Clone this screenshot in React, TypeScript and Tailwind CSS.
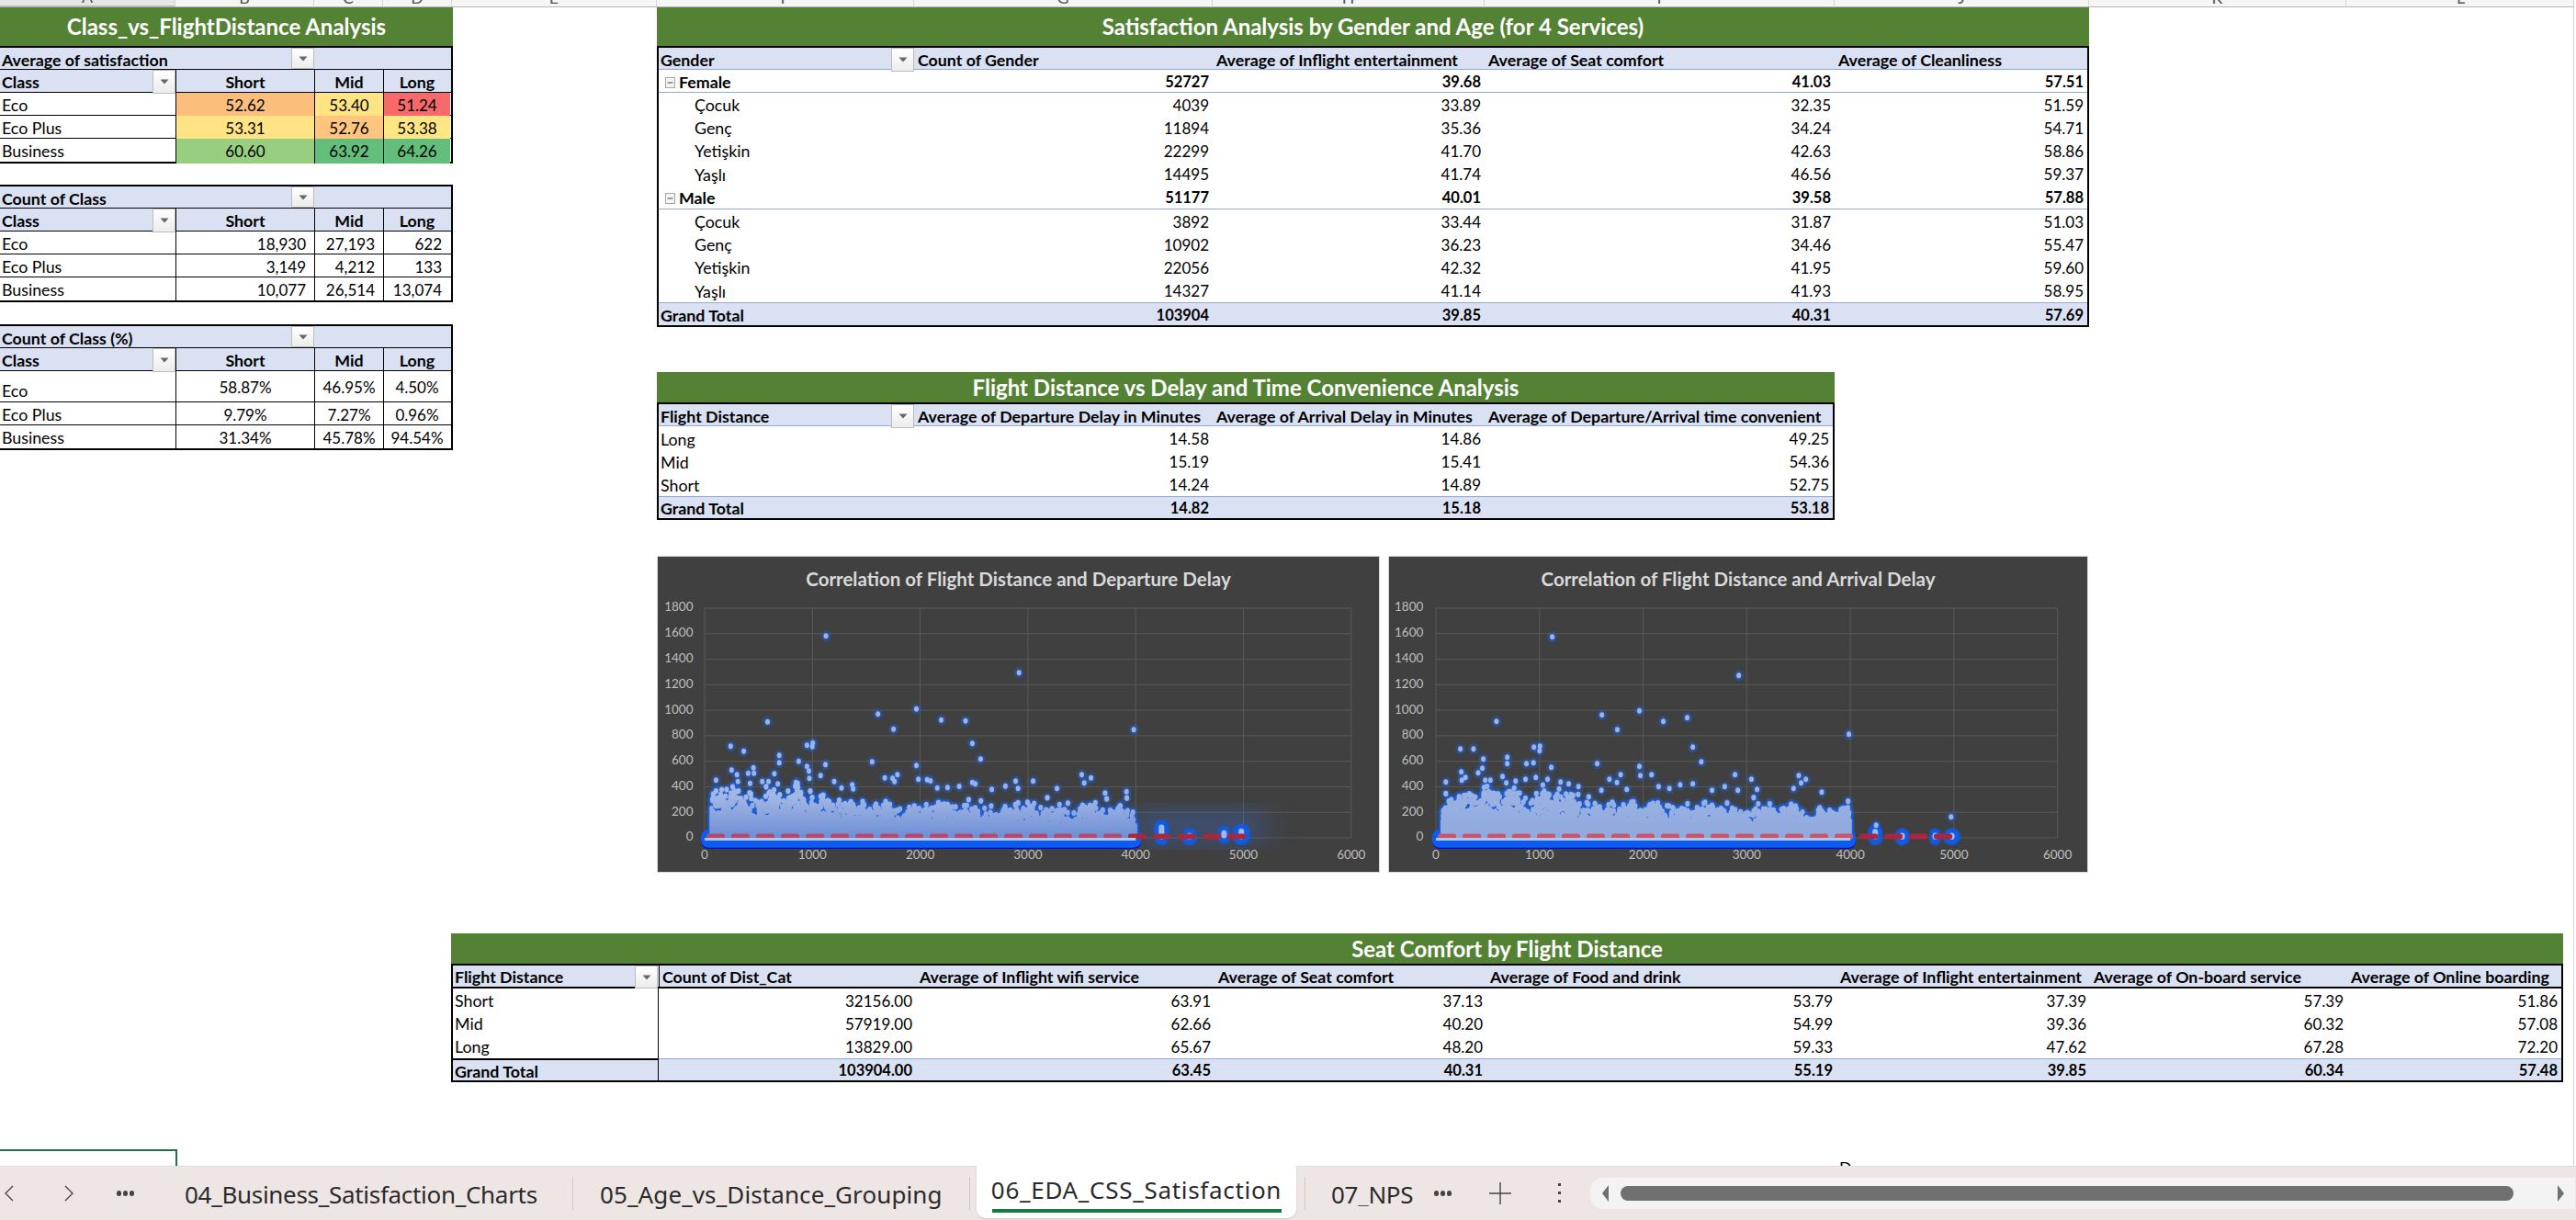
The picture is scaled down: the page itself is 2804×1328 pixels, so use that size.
// App.tsx - Excel pivot sheet, 06_EDA_CSS_Satisfaction tab
import React from "react";

const GREEN_TITLE = "bg-[#548235] text-white font-bold flex items-center justify-center text-[24px]";
const NUM = "text-[17px]";
const NUM_B = "text-[16.5px]";

const rng = (seed: number) => () => {
  seed |= 0;
  seed = (seed + 0x6d2b79f5) | 0;
  let t = Math.imul(seed ^ (seed >>> 15), 1 | seed);
  t = (t + Math.imul(t ^ (t >>> 7), 61 | t)) ^ t;
  return ((t ^ (t >>> 14)) >>> 0) / 4294967296;
};

function Drop({ className = "" }: { className?: string }) {
  return (
    <div className={"w-[25px] h-full shrink-0 border border-[#bdbdbd] bg-gradient-to-b from-white to-[#ececec] flex items-center justify-center " + className}>
      <svg width="10" height="6" viewBox="0 0 10 6"><path d="M0.5 0.5h9L5 5.5z" fill="#666" /></svg>
    </div>
  );
}

const CLASS_ROWS = ["Eco", "Eco Plus", "Business"];

function ClassHead({ title }: { title: string }) {
  return (
    <>
      <div className="flex h-[24px] bg-[#d9e1f2] border-b border-black">
        <div className="w-[317px] pl-[2px] font-bold leading-[26px]">{title}</div>
        <Drop />
      </div>
      <div className="grid grid-cols-[191px_151px_75px_73px] h-[25px] bg-[#d9e1f2] border-b border-black font-bold leading-[26px]">
        <div className="flex justify-between pl-[2px]">Class<Drop /></div>
        <div className="text-center border-l border-black">Short</div>
        <div className="text-center border-l border-black">Mid</div>
        <div className="text-center border-l border-black">Long</div>
      </div>
    </>
  );
}

function HeatTable() {
  const vals = [
    [["52.62", "bg-[#fcbf7b]"], ["53.40", "bg-[#ffe484]"], ["51.24", "bg-[#f8696b]"]],
    [["53.31", "bg-[#ffe384]"], ["52.76", "bg-[#fdc57d]"], ["53.38", "bg-[#ffe684]"]],
    [["60.60", "bg-[#98ce7f]"], ["63.92", "bg-[#63be7b]"], ["64.26", "bg-[#63be7b]"]],
  ];
  return (
    <div className="border-t-2 border-b-2 border-r-2 border-black">
      <ClassHead title="Average of satisfaction" />
      {CLASS_ROWS.map((name, i) => (
        <div key={name} className={"grid grid-cols-[191px_151px_75px_73px] h-[25px] leading-[27px] " + (i < 2 ? "border-b border-black" : "")}>
          <div className="pl-[2px]">{name}</div>
          {vals[i].map(([v, bg]) => (
            <div key={v} className={"text-center border-l border-black " + NUM + " " + bg}>{v}</div>
          ))}
        </div>
      ))}
    </div>
  );
}

function CountTable() {
  const vals = [
    ["18,930", "27,193", "622"],
    ["3,149", "4,212", "133"],
    ["10,077", "26,514", "13,074"],
  ];
  return (
    <div className="mt-[23px] border-t-2 border-b-2 border-r-2 border-black">
      <ClassHead title="Count of Class" />
      {CLASS_ROWS.map((name, i) => (
        <div key={name} className={"grid grid-cols-[191px_151px_75px_73px] h-[25px] leading-[27px] " + (i < 2 ? "border-b border-black" : "")}>
          <div className="pl-[2px]">{name}</div>
          {vals[i].map((v) => (
            <div key={v} className={"text-right pr-[9px] border-l border-black " + NUM}>{v}</div>
          ))}
        </div>
      ))}
    </div>
  );
}

function PercentTable() {
  const vals = [
    ["58.87%", "46.95%", "4.50%"],
    ["9.79%", "7.27%", "0.96%"],
    ["31.34%", "45.78%", "94.54%"],
  ];
  return (
    <div className="mt-[24px] border-t-2 border-b-2 border-r-2 border-black">
      <ClassHead title="Count of Class (%)" />
      {CLASS_ROWS.map((name, i) => (
        <div key={name} className={"grid grid-cols-[191px_151px_75px_73px] " + (i === 0 ? "h-[34px] leading-[36px] border-b border-black" : i === 1 ? "h-[25px] leading-[27px] border-b border-black" : "h-[25px] leading-[27px]")}>
          <div className={"pl-[2px] " + (i === 0 ? "pt-[3px]" : "")}>{name}</div>
          {vals[i].map((v) => (
            <div key={v} className={"text-center border-l border-black " + NUM}>{v}</div>
          ))}
        </div>
      ))}
    </div>
  );
}

const GENDER_COLS = "grid grid-cols-[278px_325px_296px_381px_275px]";

function GenderRow({ cells, kind }: { cells: string[]; kind: "female" | "male" | "child" | "last" }) {
  if (kind === "female" || kind === "male") {
    return (
      <div className={GENDER_COLS + (kind === "male" ? " h-[26px]" : " h-[25px]") + " leading-[27px] font-bold border-b border-[#8ea9db]"}>
        <div className="flex items-center pl-[7px] gap-[4px]">
          <svg width="11" height="12" viewBox="0 0 11 12" className="shrink-0">
            <rect x="0.5" y="0.5" width="10" height="11" fill="#f4f4f4" stroke="#a6a6a6" />
            <path d="M2.5 6h6" stroke="#444" />
          </svg>
          {cells[0]}
        </div>
        {cells.slice(1).map((c, i) => (
          <div key={i} className={"text-right pr-[4px] " + NUM_B}>{c}</div>
        ))}
      </div>
    );
  }
  return (
    <div className={GENDER_COLS + (kind === "last" ? " h-[26px] leading-[28px]" : " h-[25px] leading-[27px]")}>
      <div className="pl-[39px]">{cells[0]}</div>
      {cells.slice(1).map((c, i) => (
        <div key={i} className={"text-right pr-[4px] " + NUM}>{c}</div>
      ))}
    </div>
  );
}

function GenderTable() {
  const groups = [
    { head: ["Female", "52727", "39.68", "41.03", "57.51"], rows: [
      ["Çocuk", "4039", "33.89", "32.35", "51.59"],
      ["Genç", "11894", "35.36", "34.24", "54.71"],
      ["Yetişkin", "22299", "41.70", "42.63", "58.86"],
      ["Yaşlı", "14495", "41.74", "46.56", "59.37"],
    ] },
    { head: ["Male", "51177", "40.01", "39.58", "57.88"], rows: [
      ["Çocuk", "3892", "33.44", "31.87", "51.03"],
      ["Genç", "10902", "36.23", "34.46", "55.47"],
      ["Yetişkin", "22056", "42.32", "41.95", "59.60"],
      ["Yaşlı", "14327", "41.14", "41.93", "58.95"],
    ] },
  ];
  return (
    <div className="w-[1559px]">
      <div className={GREEN_TITLE + " h-[42px]"}>Satisfaction Analysis by Gender and Age (for 4 Services)</div>
      <div className="border-2 border-black">
        <div className={GENDER_COLS + " h-[24px] bg-[#d9e1f2] border-b border-[#8ea9db] font-bold leading-[26px]"}>
          <div className="flex justify-between pl-[2px]">Gender<Drop /></div>
          <div className="pl-[4px]">Count of Gender</div>
          <div className="pl-[4px]">Average of Inflight entertainment</div>
          <div className="pl-[4px]">Average of Seat comfort</div>
          <div className="pl-[4px]">Average of Cleanliness</div>
        </div>
        {groups.map((g, n) => (
          <div key={g.head[0]}>
            <GenderRow cells={g.head} kind={n === 0 ? "female" : "male"} />
            {g.rows.map((r, i) => (
              <GenderRow key={r[0]} cells={r} kind={i === 3 ? "last" : "child"} />
            ))}
          </div>
        ))}
        <div className={GENDER_COLS + " h-[25px] bg-[#d9e1f2] border-t border-[#8ea9db] font-bold leading-[26px]"}>
          <div className="pl-[2px]">Grand Total</div>
          {["103904", "39.85", "40.31", "57.69"].map((c) => (
            <div key={c} className={"text-right pr-[4px] " + NUM_B}>{c}</div>
          ))}
        </div>
      </div>
    </div>
  );
}

const DELAY_COLS = "grid grid-cols-[278px_325px_296px_379px]";

function DelayTable() {
  const rows = [
    ["Long", "14.58", "14.86", "49.25"],
    ["Mid", "15.19", "15.41", "54.36"],
    ["Short", "14.24", "14.89", "52.75"],
  ];
  return (
    <div className="w-[1282px] mt-[49px]">
      <div className={GREEN_TITLE + " h-[33px]"}>Flight Distance vs Delay and Time Convenience Analysis</div>
      <div className="border-2 border-black">
        <div className={DELAY_COLS + " h-[24px] bg-[#d9e1f2] border-b border-[#8ea9db] font-bold leading-[26px]"}>
          <div className="flex justify-between pl-[2px]">Flight Distance<Drop /></div>
          <div className="pl-[4px] whitespace-nowrap">Average of Departure Delay in Minutes</div>
          <div className="pl-[4px] whitespace-nowrap">Average of Arrival Delay in Minutes</div>
          <div className="pl-[4px] whitespace-nowrap">Average of Departure/Arrival time convenient</div>
        </div>
        {rows.map((r, i) => (
          <div key={r[0]} className={DELAY_COLS + (i === 2 ? " h-[26px] leading-[28px]" : " h-[25px] leading-[28px]")}>
            <div className="pl-[2px]">{r[0]}</div>
            {r.slice(1).map((c) => (
              <div key={c} className={"text-right pr-[4px] " + NUM}>{c}</div>
            ))}
          </div>
        ))}
        <div className={DELAY_COLS + " h-[24px] bg-[#d9e1f2] border-t border-[#8ea9db] font-bold leading-[25px]"}>
          <div className="pl-[2px]">Grand Total</div>
          {["14.82", "15.18", "53.18"].map((c) => (
            <div key={c} className={"text-right pr-[4px] " + NUM_B}>{c}</div>
          ))}
        </div>
      </div>
    </div>
  );
}

type Pt = [number, number];

const OUT_DEP: Pt[] = [
  [376,307],[773,427],[562,545],[483,562],[256,587],[613,581],[663,584],[515,611],[1009,613],[677,658],[180,667],[207,683],[337,664],[349,656],[348,668],[280,697],[280,721],[320,716],[471,718],[694,709],[562,730],[375,727],[337,733],[341,748],[227,737],[182,745],[216,755],[228,755],[193,760],[270,757],[365,763],[342,772],[150,778],[258,782],[245,782],[195,782],[220,788],[277,790],[318,788],[497,770],[513,772],[523,760],[517,782],[566,775],[584,776],[591,780],[902,760],[921,770],[907,787],[766,781],[802,781],[771,805],[745,797],[851,805],[717,808],[605,803],[626,802],[650,798],[677,785],[683,790],[430,793],[432,806],[393,782],[408,803],[994,815],[950,820],
];
const OUT_ARR: Pt[] = [
  [373,310],[771,436],[559,551],[479,565],[254,586],[610,586],[661,574],[512,613],[1006,628],[673,670],[177,676],[205,676],[334,670],[347,667],[346,682],[277,703],[277,724],[318,724],[333,721],[226,709],[469,724],[691,718],[559,733],[371,736],[224,739],[179,751],[215,754],[519,760],[561,763],[585,760],[763,760],[899,763],[914,775],[495,775],[511,785],[798,775],[904,787],[146,784],[267,766],[275,787],[180,778],[188,769],[230,778],[241,778],[295,781],[316,775],[338,769],[363,775],[408,790],[391,784],[429,799],[600,799],[623,805],[646,793],[673,790],[741,799],[769,811],[714,811],[810,808],[888,805],[948,817],[478,811],[532,808],[1224,898],[1064,925],
];

function envelope(x: number) {
  if (x < 1100) return 300;
  if (x < 1500) return 300 - ((x - 1100) / 400) * 90;
  if (x < 2600) return 210;
  return 190;
}

interface ChartProps {
  id: string;
  title: string;
  width: number;
  plotRight: number;
  labelX: number;
  outliers: Pt[];
  toSx: (z: number) => number;
  seed: number;
  light: boolean;
  blobs: [number, number, number, number][];
}

function Chart({ id, title, width, plotRight, labelX, outliers, toSx, seed, light, blobs }: ChartProps) {
  const pl = 51, top = 7.3, y0 = 257;
  const X = (v: number) => pl + (v * (plotRight - pl)) / 6000;
  const Y = (v: number) => y0 - (v * 250) / 1800;
  const r = rng(seed);
  const p1 = r() * 6, p2 = r() * 6, p3 = r() * 6;
  const wave = (v: number) => 0.5 + 0.2 * Math.sin(v / 110 + p1) + 0.2 * Math.sin(v / 43 + p2) + 0.1 * Math.sin(v / 19 + p3);
  const cols: { x: number; y: number }[] = [];
  for (let v = 62; v < 4000; v += 8) {
    const e = envelope(v);
    cols.push({ x: X(v), y: Y(e * (0.3 + 0.5 * wave(v) + 0.2 * r() * r())) });
  }
  const dots: Pt[] = [];
  for (let i = 0; i < 1000; i++) {
    const v = 70 + r() * 3920;
    const e = envelope(v);
    const k = 0.35 + 0.75 * wave(v) + 0.5 * r() * r();
    dots.push([X(v), Y(e * k)]);
  }
  for (let i = 0; i < 160; i++) {
    const v = 80 + r() * 3900;
    dots.push([X(v), Y(envelope(v) * 0.9 + r() * r() * 170)]);
  }
  const outPts: Pt[] = outliers.map(([xz, yz]) => [toSx(xz), 590 + yz / 3 - 655]);
  const all = [...dots, ...outPts];
  const dashes: number[] = [];
  for (let x = pl + 2; x < X(5000); x += 27) dashes.push(x);
  return (
    <div className="h-[345px] border border-[#d9d9d9] bg-[#404040] shrink-0 flex flex-col" style={{ width }}>
      <div className="h-[49px] flex items-center justify-center text-[#d9d9d9] font-bold text-[20.5px]">{title}</div>
      <svg width={width - 2} height="295" className="block">
        <defs>
          <linearGradient id={id + "g"} gradientUnits="userSpaceOnUse" x1="0" y1={Y(330)} x2="0" y2={y0}>
            <stop offset="0" stopColor={light ? "#9ab1e2" : "#a3b7e5"} />
            <stop offset="1" stopColor={light ? "#8fa9de" : "#6d8ed5"} />
          </linearGradient>
          <filter id={id + "b"} x="-20%" y="-20%" width="140%" height="140%"><feGaussianBlur stdDeviation="1.3" /></filter>
          <filter id={id + "h"} x="-50%" y="-50%" width="200%" height="200%"><feGaussianBlur stdDeviation="16" /></filter>
        </defs>
        {[0, 200, 400, 600, 800, 1000, 1200, 1400, 1600, 1800].map((v) => (
          <g key={v}>
            <line x1={pl} x2={plotRight} y1={Y(v)} y2={Y(v)} stroke="#595959" />
            <text x={labelX} y={Y(v)} textAnchor="end" dominantBaseline="middle" fontSize="13.5" fill="#bfbfbf">{v}</text>
          </g>
        ))}
        {[0, 1000, 2000, 3000, 4000, 5000, 6000].map((v) => (
          <g key={v}>
            <line x1={X(v)} x2={X(v)} y1={top} y2={y0} stroke="#595959" />
            <text x={X(v)} y={276.7} textAnchor="middle" dominantBaseline="middle" fontSize="13.5" fill="#bfbfbf">{v}</text>
          </g>
        ))}
        {!light && <rect x={X(4000)} y={Y(180)} width={X(5200) - X(4000)} height={Y(0) - Y(180)} fill="#3a6fd6" opacity="0.5" filter={`url(#${id}h)`} />}
        <g filter={`url(#${id}b)`}>
          {cols.map((c, i) => (
            <line key={i} x1={c.x} x2={c.x} y1={y0} y2={c.y} stroke="#1560e6" strokeWidth="8" strokeLinecap="round" />
          ))}
          {all.map(([x, y], i) => (
            <ellipse key={i} cx={x} cy={y} rx="5" ry="5.5" fill="#1f5fd6" opacity={i < 1000 ? 0.9 : 0.6} />
          ))}
          {blobs.map(([v, a, b, w], i) => (
            <rect key={i} x={X(v) - w / 2} y={Y(a) - 7} width={w} height={Y(b) - Y(a) + 15} rx={w / 2} fill="#0f5ce8" />
          ))}
        </g>
        <rect x={pl - 4} y={y0 - 8} width={X(4000) - pl + 10} height="20" rx="8" fill="#0a10b0" />
        <rect x={pl - 4} y={y0 - 9} width={X(4000) - pl + 10} height="19.7" rx="8" fill="#0a5cf5" />
        {cols.map((c, i) => (
          <line key={i} x1={c.x} x2={c.x} y1={y0} y2={c.y} stroke={`url(#${id}g)`} strokeWidth="4" strokeLinecap="round" />
        ))}
        {dots.map(([x, y], i) => (
          <ellipse key={i} cx={x} cy={y} rx="2.6" ry="3.1" fill={`url(#${id}g)`} />
        ))}
        {outPts.map(([x, y], i) => (
          <ellipse key={i} cx={x} cy={y} rx="2.5" ry="3" fill="#9cb3e3" />
        ))}
        {blobs.map(([v, a, b], i) => (
          <rect key={i} x={X(v) - 3} y={Y(a) - 2} width="6" height={Y(b) - Y(a) + 4} rx="3" fill="#a3b8e6" />
        ))}
        {dashes.map((x) => (
          <rect key={x} x={x} y={y0 - 4.5} width="20" height="6" rx="2.5" fill={x + 10 > X(4000) ? "#a5283f" : light ? "#c9566f" : "#b5496b"} />
        ))}
        <rect x={pl} y={y0} width={X(4000) - pl} height="3" fill="#b4c5ea" />
      </svg>
    </div>
  );
}

function Charts() {
  return (
    <div className="flex gap-[9px] mt-[39px]">
      <Chart
        id="dep" title="Correlation of Flight Distance and Departure Delay" width={787} plotRight={754.8} labelX={38.5}
        outliers={OUT_DEP} toSx={(z) => z / 1.889 - 16} seed={7} light={false}
        blobs={[[4240, 90, 0, 16], [4500, 25, 0, 16], [4820, 45, 10, 12], [4980, 60, 0, 19]]}
      />
      <Chart
        id="arr" title="Correlation of Flight Distance and Arrival Delay" width={762} plotRight={727.6} labelX={37.3}
        outliers={OUT_ARR} toSx={(z) => z / 1.96 - 12.7} seed={21} light
        blobs={[[4240, 55, 0, 16], [4500, 25, 0, 16], [4820, 25, 0, 12], [4980, 25, 0, 19]]}
      />
    </div>
  );
}

const COMFORT_COLS = "grid grid-cols-[224px_280px_325px_296px_381px_276px_280px_233px]";

function ComfortTable() {
  const rows = [
    ["Short", "32156.00", "63.91", "37.13", "53.79", "37.39", "57.39", "51.86"],
    ["Mid", "57919.00", "62.66", "40.20", "54.99", "39.36", "60.32", "57.08"],
    ["Long", "13829.00", "65.67", "48.20", "59.33", "47.62", "67.28", "72.20"],
  ];
  const heads = [
    "Count of Dist_Cat", "Average of Inflight wifi service", "Average of Seat comfort", "Average of Food and drink",
    "Average of Inflight entertainment", "Average of On-board service", "Average of Online boarding",
  ];
  return (
    <div className="ml-[491px] mt-[66px] w-[2299px]">
      <div className={GREEN_TITLE + " h-[33px]"}>Seat Comfort by Flight Distance</div>
      <div className="border-2 border-black">
        <div className={COMFORT_COLS + " h-[25px] bg-[#d9e1f2] border-b-2 border-black font-bold leading-[25px]"}>
          <div className="flex justify-between pl-[2px] pr-[1px]">Flight Distance<Drop /></div>
          {heads.map((h, i) => (
            <div key={h} className={"whitespace-nowrap " + (i === 0 ? "pl-[3px] border-l border-black" : "pl-[4px]")}>{h}</div>
          ))}
        </div>
        {rows.map((r, i) => (
          <div key={r[0]} className={COMFORT_COLS + (i === 2 ? " h-[26px] leading-[27px]" : " h-[25px] leading-[27px]")}>
            <div className="pl-[2px] border-r border-black">{r[0]}</div>
            {r.slice(1).map((c, j) => (
              <div key={j} className={"text-right pr-[4px] " + NUM}>{c}</div>
            ))}
          </div>
        ))}
        <div className={COMFORT_COLS + " h-[24px] bg-[#d9e1f2] font-bold leading-[24px]"}>
          <div className="pl-[2px] border-t-2 border-r border-black">Grand Total</div>
          {["103904.00", "63.45", "40.31", "55.19", "39.85", "60.34", "57.48"].map((c, j) => (
            <div key={j} className={"text-right pr-[4px] border-t border-[#8ea9db] " + NUM_B}>{c}</div>
          ))}
        </div>
      </div>
    </div>
  );
}

function ColumnStrip() {
  const cols = [
    ["A", "w-[191px] bg-[#e6e6e6] border-b-2 border-b-[#217346]"],
    ["B", "w-[151px]"], ["C", "w-[75px]"], ["D", "w-[75px]"], ["E", "w-[223px]"],
    ["F", "w-[280px]"], ["G", "w-[325px]"], ["H", "w-[296px]"], ["I", "w-[381px]"],
    ["J", "w-[277px]"], ["K", "w-[280px]"], ["L", "w-[250px]"],
  ];
  return (
    <div className="flex h-[8px] shrink-0 overflow-hidden text-[#555] bg-[#f5f5f5]">
      {cols.map(([l, c]) => (
        <div key={l} className={"box-border shrink-0 flex justify-center items-end border-r border-r-[#d4d4d4] border-b border-b-[#b5b5b5] " + c}>
          <span className="leading-[18px] pb-[1px]">{l}</span>
        </div>
      ))}
    </div>
  );
}

function Dots({ className = "" }: { className?: string }) {
  return (
    <div className={"flex gap-[2px] items-center shrink-0 " + className}>
      <span className="w-[5px] h-[6px] rounded-full bg-[#444]" />
      <span className="w-[5px] h-[6px] rounded-full bg-[#444]" />
      <span className="w-[5px] h-[6px] rounded-full bg-[#444]" />
    </div>
  );
}

function TabBar() {
  const tab = "text-[26px] leading-none whitespace-nowrap text-[#2b2b2b] pt-[3px] shrink-0";
  return (
    <div className="h-[59px] shrink-0 bg-[#eee6e5] border-t border-[#e0dcdc] flex items-start font-['Noto_Sans',sans-serif] tracking-[-0.3px]">
      <div className="flex items-center h-[59px] pb-[2px]">
        <svg width="14" height="20" viewBox="0 0 14 20" className="ml-[3px] shrink-0"><path d="M11 2L3 10l8 8" fill="none" stroke="#444" strokeWidth="1.3" /></svg>
        <svg width="14" height="20" viewBox="0 0 14 20" className="ml-[51px] shrink-0"><path d="M3 2l8 8-8 8" fill="none" stroke="#444" strokeWidth="1.3" /></svg>
        <Dots className="ml-[45px]" />
        <div className={tab + " ml-[55px] w-[422px]"}>04_Business_Satisfaction_Charts</div>
        <div className="w-px h-[36px] bg-[#cfc9c8] shrink-0" />
        <div className={tab + " ml-[29px] w-[402px] tracking-[0.1px]"}>05_Age_vs_Distance_Grouping</div>
        <div className="h-[36px] w-px bg-[#cfc9c8] shrink-0 mr-[7px]" />
        <div className="w-[348px] h-[57px] -mt-[1px] pt-[13px] bg-white rounded-b-[10px] shadow-[0_1px_2px_rgba(0,0,0,0.15)] flex flex-col items-center shrink-0 self-start">
          <div className="text-[26px] leading-none whitespace-nowrap text-[#2b2b2b] tracking-[0.7px]">06_EDA_CSS_Satisfaction</div>
          <div className="mt-[8px] w-[315px] h-[4px] bg-[#107c41]" />
        </div>
        <div className="h-[36px] w-px bg-[#cfc9c8] shrink-0 ml-[9px]" />
        <div className={tab + " ml-[28px] w-[92px] overflow-hidden"}>07_NPS</div>
        <Dots className="ml-[20px]" />
        <svg width="24" height="24" viewBox="0 0 24 24" className="ml-[41px] shrink-0"><path d="M12 0v24M0 12h24" stroke="#444" strokeWidth="1.4" /></svg>
        <div className="ml-[51px] w-[3px] flex flex-col gap-[6px] shrink-0">
          <span className="h-[3px] bg-[#444]" /><span className="h-[3px] bg-[#444]" /><span className="h-[3px] bg-[#444]" />
        </div>
        <div className="ml-[32px] w-[1072px] h-[34px] rounded-l-[14px] bg-[#f3f3f3] flex items-center shrink-0">
          <svg width="10" height="22" viewBox="0 0 10 22" className="ml-[11px] shrink-0"><path d="M9 2v18L2 11z" fill="#707070" /></svg>
          <div className="ml-[12px] w-[972px] h-[16px] rounded-[8px] bg-[#707070]" />
          <svg width="10" height="22" viewBox="0 0 10 22" className="ml-[47px] shrink-0"><path d="M1 2v18l7-9z" fill="#707070" /></svg>
        </div>
      </div>
    </div>
  );
}

export default function App() {
  return (
    <div className="w-[2804px] h-[1328px] overflow-hidden bg-white flex flex-col font-['Lato',sans-serif] text-[17.8px] text-black">
      <div className="flex-1 w-[2802px] border-r border-[#d4d4d4]">
        <ColumnStrip />
        <div className="flex">
          <div className="w-[493px] shrink-0">
            <div className={GREEN_TITLE + " h-[42px]"}>Class_vs_FlightDistance Analysis</div>
            <HeatTable />
            <CountTable />
            <PercentTable />
          </div>
          <div className="ml-[222px] flex flex-col">
            <GenderTable />
            <DelayTable />
            <Charts />
          </div>
        </div>
        <ComfortTable />
        <div className="flex h-[18px] mt-[73px]">
          <div className="w-[193px] h-[18px] border-t-2 border-r-2 border-[#217346]" />
          <div className="ml-[1809px] h-[18px] overflow-hidden flex items-start"><span className="leading-[22px] mt-[9px]">D</span></div>
        </div>
      </div>
      <TabBar />
    </div>
  );
}
